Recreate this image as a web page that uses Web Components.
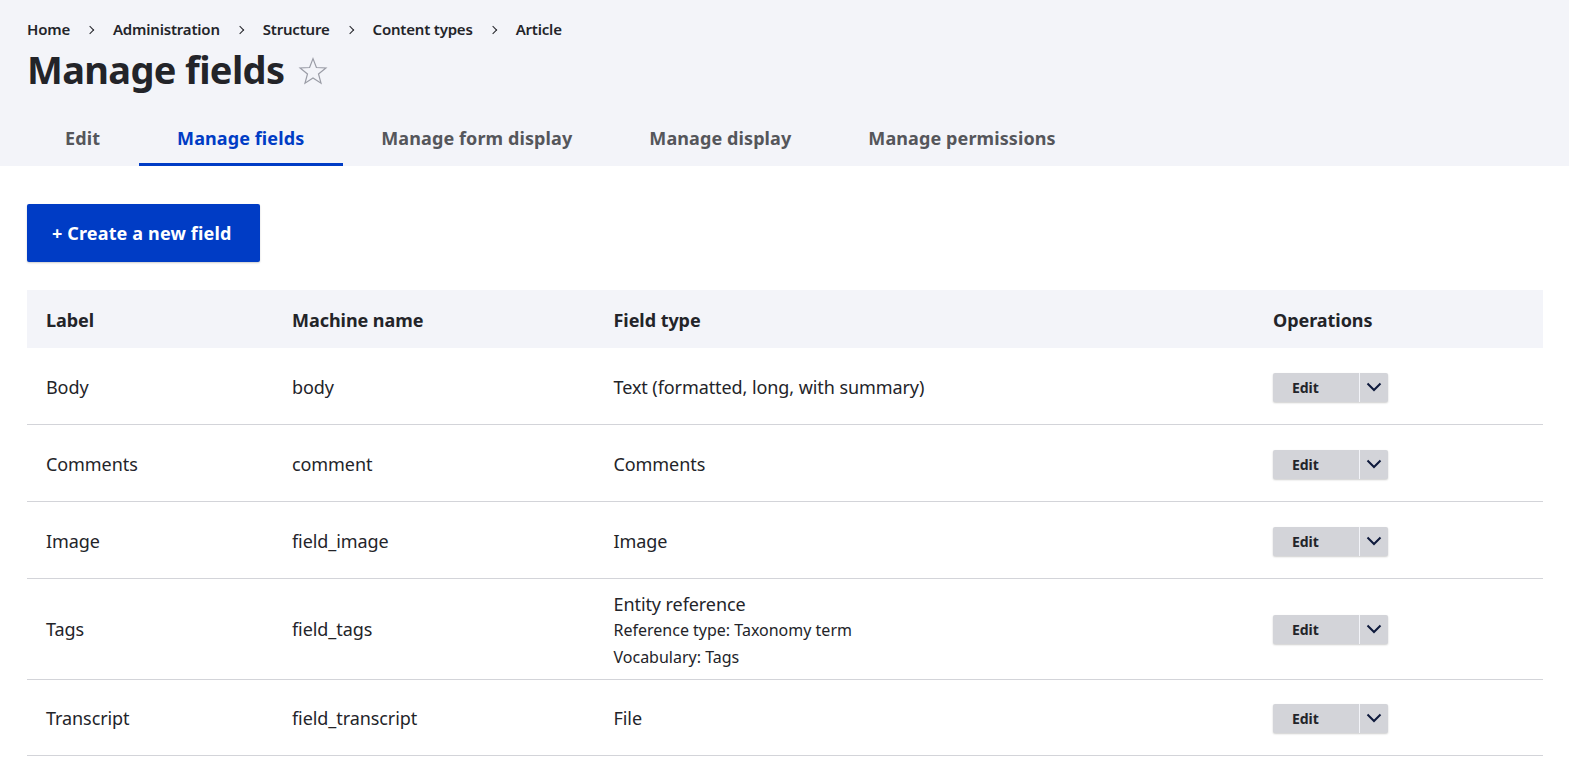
<!DOCTYPE html>
<html lang="en">
<head>
<meta charset="utf-8">
<title>Manage fields</title>
<style>
  html, body { margin: 0; padding: 0; background: #fff; }
  body { font-family: "Noto Sans", "Open Sans", sans-serif; color: #232429; overflow: hidden; }
</style>
</head>
<body>
<page-head>
  <bread-crumbs>
    <a>Home</a><a>Administration</a><a>Structure</a><a>Content types</a><a>Article</a>
  </bread-crumbs>
  <page-title>Manage fields</page-title>
  <tab-bar>
    <tab-item>Edit</tab-item>
    <tab-item active>Manage fields</tab-item>
    <tab-item>Manage form display</tab-item>
    <tab-item>Manage display</tab-item>
    <tab-item>Manage permissions</tab-item>
  </tab-bar>
</page-head>
<page-body>
  <action-button>+ Create a new field</action-button>
  <field-table>
    <field-row head>
      <span>Label</span><span>Machine name</span><span>Field type</span><span>Operations</span>
    </field-row>
    <field-row>
      <span>Body</span><span>body</span><span>Text (formatted, long, with summary)</span><drop-button></drop-button>
    </field-row>
    <field-row>
      <span>Comments</span><span>comment</span><span>Comments</span><drop-button></drop-button>
    </field-row>
    <field-row>
      <span>Image</span><span>field_image</span><span>Image</span><drop-button></drop-button>
    </field-row>
    <field-row tall>
      <span>Tags</span><span>field_tags</span>
      <span class="stack">Entity reference<type-note>Reference type: Taxonomy term</type-note><type-note>Vocabulary: Tags</type-note></span>
      <drop-button></drop-button>
    </field-row>
    <field-row last>
      <span>Transcript</span><span>field_transcript</span><span>File</span><drop-button></drop-button>
    </field-row>
  </field-table>
</page-body>

<script>
function define(name, css, html, setup) {
  customElements.define(name, class extends HTMLElement {
    connectedCallback() {
      if (this.shadowRoot) return;
      this.attachShadow({ mode: 'open' });
      this.shadowRoot.innerHTML = `<style>${css}</style>${html}`;
      if (setup) setup(this);
    }
  });
}

define('page-head', `
  :host { display: block; background: #f3f4f9; height: 166px; padding: 19px 27px 0; box-sizing: border-box; }
`, `<slot></slot>`);

define('bread-crumbs', `
  :host { display: block; font-size: 15px; font-weight: 600; line-height: 21px; color: #232429; letter-spacing: -0.2px; }
  ul { display: flex; margin: 0; padding: 0; list-style: none; }
  li { display: flex; align-items: center; }
  li + li::before {
    content: ""; width: 5px; height: 5px; margin: 0 20px 0 17px;
    border-top: 1.5px solid #232429; border-right: 1.5px solid #232429;
    transform: rotate(45deg);
  }
`, `<ul></ul>`, el => {
  const list = el.shadowRoot.querySelector('ul');
  [...el.querySelectorAll('a')].forEach(a => {
    const li = document.createElement('li');
    li.textContent = a.textContent;
    list.appendChild(li);
  });
});

define('page-title', `
  :host { display: flex; align-items: center; gap: 14px; margin-top: 5px; height: 48px; }
  h1 { margin: 0; font-size: 38px; font-weight: 700; line-height: 48px; color: #232429; letter-spacing: -0.65px; }
  svg { width: 30px; height: 30px; display: block; margin-top: 4px; }
`, `<h1><slot></slot></h1>
  <svg viewBox="0 0 30 30"><path d="M15 2.6l3.4 8.9 9.5.5-7.4 6 2.5 9.2-8-5.2-8 5.2 2.5-9.2-7.4-6 9.5-.5z" fill="none" stroke="#9a9ca6" stroke-width="1.2" stroke-linejoin="miter"/></svg>`);

define('tab-bar', `
  :host { display: flex; margin: 20px 0 0 -0.5px; height: 53px; }
`, `<slot></slot>`);

define('tab-item', `
  :host { display: flex; align-items: center; box-sizing: border-box; height: 53px; padding: 0 38.5px 3px; font-size: 18px; font-weight: 700; color: #55565b; letter-spacing: 0.1px; white-space: nowrap; }
  :host([active]) { color: #003cc5; border-bottom: 3px solid #003cc5; padding-bottom: 0; }
`, `<slot></slot>`);

define('page-body', `
  :host { display: block; padding: 38px 26px 0 27px; }
`, `<slot></slot>`);

define('action-button', `
  :host { display: inline-flex; align-items: center; height: 58px; padding: 0 29px 0 25px; box-sizing: border-box; background: #003cc5; color: #fff; border-radius: 2px; font-size: 18px; font-weight: 700; letter-spacing: 0.15px; box-shadow: 0 1px 2px rgba(0,0,0,.2); margin-bottom: 28px; vertical-align: top; }
`, `<slot></slot>`);

define('field-table', `
  :host { display: block; }
`, `<slot></slot>`);

define('field-row', `
  :host { display: grid; grid-template-columns: 246px 321.5px 659.5px 1fr; align-items: center; height: 77px; box-sizing: border-box; border-bottom: 1px solid #d3d4d9; font-size: 18px; letter-spacing: -0.08px; color: #232429; }
  :host([head]) { height: 58px; background: #f3f4f9; border-bottom: 0; font-weight: 700; letter-spacing: -0.05px; }
  :host([tall]) { height: 101px; }
  :host([last]) { height: 76px; }
  ::slotted(*) { padding: 2px 0 0 19px; line-height: 26px; }
  :host([tall]) ::slotted(*) { padding-top: 0; }
  :host([tall]) ::slotted(.stack) { padding-top: 4px; }
  :host([last]) ::slotted(*) { padding-top: 1px; }
`, `<slot></slot>`);

define('type-note', `
  :host { display: block; font-size: 16px; line-height: 27px; letter-spacing: 0; }
`, `<slot></slot>`);

define('drop-button', `
  :host { display: flex; }
  .wrap { display: flex; width: 115px; height: 29px; background: #d3d4d9; border-radius: 2px; box-shadow: 0 1px 2px rgba(0,0,0,.2); }
  .label { flex: 0 0 87px; border-right: 1px solid #f3f4f9; box-sizing: border-box; padding-left: 19px; font-size: 14px; font-weight: 700; line-height: 29px; color: #232429; }
  .toggle { flex: 1; display: flex; align-items: center; justify-content: center; }
  svg { width: 16px; height: 10px; display: block; }
`, `<div class="wrap"><div class="label">Edit</div><div class="toggle"><svg viewBox="0 0 16 10"><path d="M1.5 1.5L8 8l6.5-6.5" fill="none" stroke="#0e1a3c" stroke-width="2"/></svg></div></div>`);
</script>
</body>
</html>
